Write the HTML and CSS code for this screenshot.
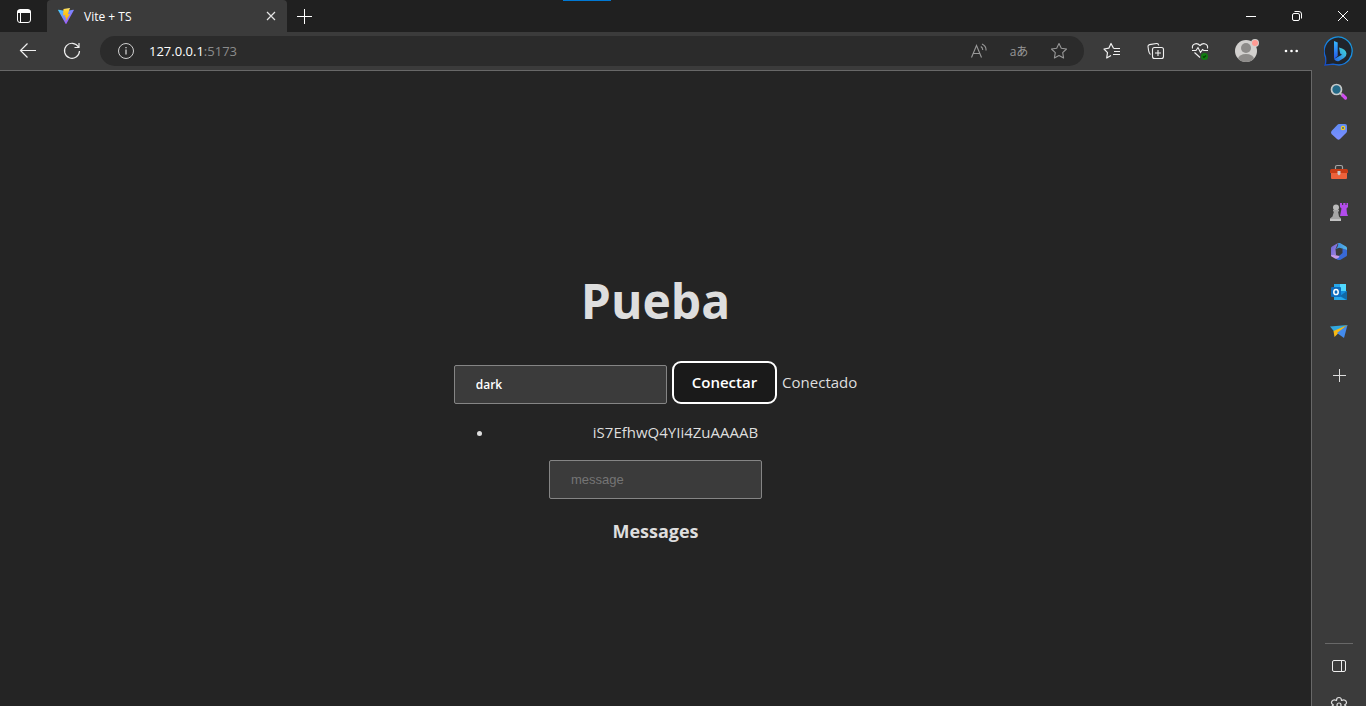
FILE: index.html
```html
<!DOCTYPE html>
<html lang="es">
<head>
<meta charset="utf-8">
<meta name="viewport" content="width=device-width, initial-scale=1">
<title>Vite + TS</title>
<link rel="stylesheet" href="styles.css">
</head>
<body>
<header class="titlebar">
  <span class="window-accent"></span>
  <button class="icon-button tab-actions" aria-label="Tab actions">
    <svg width="16" height="16" viewBox="0 0 16 16" fill="none" stroke="#fff"><rect x="1.5" y="1.5" width="13" height="13" rx="2.5"/><path d="M2 2.5h12v2H2z" fill="#fff"/><path d="M4.5 5v9"/></svg>
  </button>
  <div class="tab">
    <svg width="16" height="16" viewBox="0 0 32 32"><defs><linearGradient id="v1" x1="0" y1="0" x2="1" y2="1"><stop stop-color="#41d1ff"/><stop offset="1" stop-color="#bd34fe"/></linearGradient><linearGradient id="v2" x1="0" y1="0" x2="0" y2="1"><stop stop-color="#ffea83"/><stop offset=".2" stop-color="#ffcf28"/><stop offset="1" stop-color="#ffa800"/></linearGradient></defs><path d="M31.7 4.7 16.8 31.300q-.8 1.200-1.600 0L.2 4.700q-.5-1.400 1-1.300L16 6l14.700-2.600q1.500 0 1 1.300z" fill="url(#v1)"/><path d="m24 0-13 2.200-.9 12.600 4.400-.6-1 5 3-.7-1.500 8.500L24 12l-4.500.7L21.500 7z" fill="url(#v2)"/></svg>
    <span class="tab-title">Vite + TS</span>
    <button class="tab-close" aria-label="Close tab"><svg width="10" height="10" viewBox="0 0 10 10" stroke="#e4e4e4" stroke-width="1.200"><path d="m1 1 8 8M9 1 1 9"/></svg></button>
  </div>
  <button class="icon-button new-tab" aria-label="New tab"><svg width="15" height="15" viewBox="0 0 15 15" stroke="#fff"><path d="M7.500 0v15M0 7.500h15"/></svg></button>
  <div class="window-controls">
    <button class="icon-button" aria-label="Minimize"><svg width="10" height="10" viewBox="0 0 10 10" stroke="#fff"><path d="M0 5.500h10"/></svg></button>
    <button class="icon-button" aria-label="Restore"><svg width="10" height="10" viewBox="0 0 10 10" fill="none" stroke="#fff"><rect x=".5" y="2.500" width="7" height="7" rx="1.500"/><path d="M2.500.5H7A2.500 2.500 0 0 1 9.500 3v4.500"/></svg></button>
    <button class="icon-button" aria-label="Close"><svg width="10" height="10" viewBox="0 0 10 10" stroke="#fff"><path d="m0 0 10 10m0-10L0 10"/></svg></button>
  </div>
</header>

<div class="workspace">
  <div class="main-column">
    <nav class="toolbar" aria-label="Browser">
      <button class="icon-button" aria-label="Back"><svg width="18" height="16" viewBox="0 0 18 16" fill="none" stroke="#f0f0f0" stroke-width="1.200"><path d="M17 7.500H1.500M8.500.5l-7 7 7 7"/></svg></button>
      <button class="icon-button" aria-label="Reload"><svg width="18" height="18" viewBox="0 0 18 18" fill="none" stroke="#f0f0f0" stroke-width="1.200"><path d="M15.500 5A7.500 7.500 0 1 0 16.500 9M16 1v4.500h-4.500"/></svg></button>
      <div class="address">
        <svg class="info" width="18" height="18" viewBox="0 0 18 18" fill="none" stroke="#d0d0d0"><circle cx="9" cy="9" r="7.500"/><path d="M9 7.500v5M9 5v1.300" stroke-width="1.300"/></svg>
        <a class="url" href="#"><span class="host">127.0.0.1</span>:5173</a>
        <button class="icon-button" aria-label="Read aloud"><svg width="16" height="16" viewBox="0 0 16 16" fill="none" stroke="#989898" stroke-width="1.100"><path d="m.5 14.500 5-12 5 12M2.300 10.500h6.400M9.800 3.500q2 1.200 1.900 3.500M11 1q4.400 2 4 6.500"/></svg></button>
        <button class="icon-button translate" aria-label="Translate">aあ</button>
        <button class="icon-button" aria-label="Add favorite"><svg width="18" height="18" viewBox="0 0 18 18" fill="none" stroke="#989898" stroke-width="1.100" stroke-linejoin="round"><path d="m9 1.500 2.300 4.700 5.200.8-3.800 3.700.9 5.300L9 13.500 4.400 16l.9-5.300L1.500 7l5.200-.8z"/></svg></button>
      </div>
      <button class="icon-button favorites" aria-label="Favorites"><svg width="18" height="18" viewBox="0 0 18 18" fill="none" stroke="#f0f0f0" stroke-width="1.200" stroke-linejoin="round"><path d="M10.500 6.200 8 1.500 5.800 6.200 1 7l3.500 3.700L3.700 16 8 13.500M10.500 6.500h6.500M11 9.500h6M10 12.500h7"/></svg></button>
      <button class="icon-button" aria-label="Collections"><svg width="18" height="18" viewBox="0 0 18 18" fill="none" stroke="#f0f0f0" stroke-width="1.100"><rect x="5.500" y="5.500" width="11" height="11" rx="2"/><path d="M11 8v6M8 11h6M3.500 12.500C2 11.500 2 10.500 1.500 8L1 4.500Q.8 3 2.500 2.600L9.500 1.500q1.800-.3 2.300 2"/></svg></button>
      <button class="icon-button" aria-label="Browser essentials"><svg width="18" height="18" viewBox="0 0 18 18" fill="none" stroke="#f0f0f0" stroke-width="1.100"><path d="M1.500 6.500C.5 1.500 6 .3 9 3.500c3-3.200 8.500-2 7.500 3M1 8.500h4l2-3 2.500 5 2-3 1.300 1H17M3.500 10.500 9 15.500"/><circle cx="13.500" cy="14.500" r="3.500" fill="#107c10" stroke="none"/><path d="m12 14.500 1 1 2-2" stroke="#063d06"/></svg></button>
      <button class="icon-button profile" aria-label="Profile"><svg width="26" height="26" viewBox="0 0 26 26"><defs><clipPath id="face"><circle cx="13" cy="13" r="11"/></clipPath></defs><circle cx="13" cy="13" r="11" fill="#d2d0ce"/><g clip-path="url(#face)" fill="#8d8b89"><circle cx="13" cy="10" r="5"/><ellipse cx="13" cy="21" rx="8" ry="5"/></g><circle cx="22" cy="5" r="4" fill="#d2d0ce"/><circle cx="22" cy="5" r="3" fill="#ff9a93"/></svg></button>
      <button class="icon-button" aria-label="More"><svg width="14" height="4" viewBox="0 0 14 4" fill="#fff"><circle cx="2" cy="2" r="1.300"/><circle cx="7.500" cy="2" r="1.300"/><circle cx="12.700" cy="2" r="1.300"/></svg></button>
    </nav>

    <main class="page">
      <div class="app">
        <h1>Pueba</h1>
        <form class="connect">
          <input class="field name" type="text" value="dark" aria-label="Token">
          <button class="connect-button" type="button">Conectar</button>
          <span>Conectado</span>
        </form>
        <ul class="clients"><li>iS7EfhwQ4YIi4ZuAAAAB</li></ul>
        <form class="message-form"><input class="field" type="text" placeholder="message" aria-label="message"></form>
        <h3>Messages</h3>
      </div>
    </main>
  </div>

  <aside class="sidebar" aria-label="Sidebar">
    <button class="icon-button bing" aria-label="Bing"><svg width="30" height="30" viewBox="0 0 30 30"><defs><linearGradient id="b1" x1="1" y1="0" x2="0" y2="1"><stop stop-color="#189bdc"/><stop offset=".5" stop-color="#1689e5"/><stop offset="1" stop-color="#1748c4"/></linearGradient><linearGradient id="b2" x1="0" y1="0" x2="0" y2="1"><stop stop-color="#36b8ff"/><stop offset="1" stop-color="#2456e8"/></linearGradient><linearGradient id="b3" x1="1" y1="0" x2="0" y2="1"><stop stop-color="#45dfd6"/><stop offset="1" stop-color="#2264ed"/></linearGradient></defs><path d="M1 29c1.200-2 .8-5 .5-8A14 14 0 1 1 15 29q-3 0-6-.8Q5 29 1 29z" fill="#20242b" stroke="url(#b1)" stroke-width="1.300"/><path d="m10 5 3.700 1.600V20L10 23z" fill="url(#b2)"/><path d="M15 11.500q7 1.500 7.500 6 .1 3-2.500 4.500l-5 3q-2.500 1.300-5-2l8-4.300-1.800-1.200z" fill="url(#b3)"/></svg></button>
    <button class="icon-button" aria-label="Search"><svg width="18" height="18" viewBox="0 0 18 18"><path d="m12.500 12 3 3" stroke="#cf4cf0" stroke-width="3.200" stroke-linecap="round"/><path d="m10 10 2 2" stroke="#aaa" stroke-width="2"/><circle cx="6.500" cy="6.500" r="5" fill="#246a88" stroke="#c6c9c9" stroke-width="1.700"/></svg></button>
    <button class="icon-button" aria-label="Shopping"><svg width="18" height="18" viewBox="0 0 18 18"><defs><linearGradient id="tag" x2="0" y2="1"><stop stop-color="#5f8bf4"/><stop offset="1" stop-color="#7d8eff"/></linearGradient></defs><path d="M9 1h6q2 0 2 2v5q0 1-.7 1.700L10 16q-1.500 1.300-3 0L1.500 11q-1-1.500 0-3L7.500 1.700Q8 1 9 1z" fill="url(#tag)"/><circle cx="13" cy="5" r="1.600" fill="#405798" stroke="#f0d020" stroke-width="1.300"/></svg></button>
    <button class="icon-button" aria-label="Tools"><svg width="18" height="16" viewBox="0 0 18 16"><path d="M5.500 5V3q0-1.500 1.500-1.500h4q1.500 0 1.500 1.500v2" fill="none" stroke="#a5a5a5" stroke-width="1.200"/><path d="M1 8h16v6q0 1-1 1H2q-1 0-1-1z" fill="#ed623b"/><path d="M1.500 5h15q1.500 0 1.500 2v2H0V7q0-2 1.500-2z" fill="#c83c16"/><path d="M7.500 7h3v3L9 11.500 7.500 10z" fill="#c9cccf"/></svg></button>
    <button class="icon-button" aria-label="Games"><svg width="18" height="18" viewBox="0 0 18 18"><path d="M10 0h2v2h1.200V0h2.300v2h1V0H18v4l-1.500 1.500.5 5 1 2.500h-8l1.500-7.500L10 4z" fill="#b34cec"/><circle cx="6" cy="4.500" r="3" fill="#bbb"/><path d="M3 7h6v1.500H8l1 5 2 2V18H0v-2.500l2.500-2 1.500-5H3z" fill="#a5a5a5"/><path d="M0 16h11v2H0z" fill="#c2c2c2"/></svg></button>
    <button class="icon-button" aria-label="Microsoft 365"><svg width="18" height="18" viewBox="0 0 18 18"><defs><linearGradient id="m1" x2="1" y2="1"><stop stop-color="#6561d5"/><stop offset="1" stop-color="#a98be0"/></linearGradient><linearGradient id="m2" x2="1"><stop stop-color="#3a83dd"/><stop offset="1" stop-color="#55b9e9"/></linearGradient></defs><path d="M8 0 2 3.500Q1 4 1 5v7q0 1.500 1.500 2L6 12l-.5-6z" fill="url(#m1)"/><path d="M8 0q1-.4 2 0l6 3.500q1 .5 1 2V9l-4-3.300-3.500-1L5.500 6Q9 3 8 0z" fill="url(#m2)"/><path d="M17 7v5q0 1-1 1.500l-5 3q-2 1.200-4 0l-2-1.500 4.500-2.500L12.500 10V6q3.500 0 4.500 1z" fill="#3869d6"/><path d="m1 12 5 .3 3.500.7q-1 3.500-4.500 2.500l-3-1.700Q1 13 1 12z" fill="#c69bea"/></svg></button>
    <button class="icon-button" aria-label="Outlook"><svg width="18" height="18" viewBox="0 0 18 18"><path d="M4 1h12v8H4z" fill="#28a8ea"/><path d="M10 1h6v7h-6z" fill="#50d9ff"/><path d="M4 8h13v9H4z" fill="#1490df"/><path d="m10 13 7-5v9z" fill="#1269a5"/><path d="m4 10 12 7H4z" fill="#28a8ea"/><rect x="1" y="4" width="10" height="10" rx="1" fill="#0f6cbd"/><ellipse cx="6" cy="9" rx="2.200" ry="2.600" fill="none" stroke="#fff" stroke-width="1.500"/></svg></button>
    <button class="icon-button" aria-label="Drop"><svg width="18" height="16" viewBox="0 0 18 16"><path d="M0 2.500 17.500 1 4.500 8z" fill="#32a8de"/><path d="M17.500 1 3.500 7 4.500 13l3.500-3.500z" fill="#f8b912"/><path d="M17.500 1 7 9l7 5z" fill="#438bed"/></svg></button>
    <button class="icon-button add" aria-label="Customize"><svg width="13" height="13" viewBox="0 0 13 13" stroke="#ddd"><path d="M6.500 0v13M0 6.500h13"/></svg></button>
    <div class="sidebar-bottom">
      <button class="icon-button" aria-label="Hide sidebar"><svg width="14" height="12" viewBox="0 0 14 12" fill="none" stroke="#eee"><rect x=".5" y=".5" width="13" height="11" rx="1.500"/><path d="M9.500 1v10"/></svg></button>
      <button class="icon-button settings" aria-label="Settings"><svg width="18" height="18" viewBox="0 0 18 18" fill="none" stroke="#ddd" stroke-width="1.200" stroke-linejoin="round"><path d="M6.500 4.500Q6.500 1.500 9 1.500t2.500 3q3-1.500 4.500.7t-1.500 3.800q3 1.600 1.500 3.800t-4.500.7q0 3-2.500 3t-2.500-3q-3 1.500-4.500-.7T3.500 9Q.5 7.400 2 5.200t4.500-.7z"/><circle cx="9" cy="9" r="2"/></svg></button>
    </div>
  </aside>
</div>
</body>
</html>
```
FILE: styles.css
```css
* { box-sizing: border-box; }

body {
  margin: 0;
  height: 100vh;
  display: flex;
  flex-direction: column;
  overflow: hidden;
  background: #3b3b3b;
  color: #dedede;
  font-family: "Open Sans", "Noto Sans", "Noto Sans CJK JP", sans-serif;
}

svg { display: block; flex: none; }

button {
  border: 0;
  padding: 0;
  background: none;
  color: inherit;
  font-family: inherit;
}

.icon-button {
  display: flex;
  align-items: center;
  justify-content: center;
  flex: none;
}

.titlebar {
  position: relative;
  display: flex;
  flex: none;
  height: 32px;
  background: #202020;
}

.window-accent {
  position: absolute;
  top: 0;
  left: calc(50% - 120px);
  width: 48px;
  height: 1px;
  background: #0078d4;
}

.tab-actions { width: 47px; }

.tab {
  display: flex;
  align-items: center;
  gap: 10px;
  width: 240px;
  padding: 0 11px;
  border-radius: 4px 4px 0 0;
  background: #3b3b3b;
  color: #fff;
  font-size: 12px;
}

.tab-title { flex: 1; }
.tab-close { padding: 0; }
.new-tab { width: 35px; }

.window-controls {
  display: flex;
  margin-left: auto;
}

.window-controls .icon-button { width: 46px; }

.workspace {
  display: flex;
  flex: 1;
  min-height: 0;
}

.main-column {
  display: flex;
  flex: 1;
  flex-direction: column;
  min-width: 0;
}

.toolbar {
  display: flex;
  align-items: center;
  flex: none;
  height: 38px;
  padding-left: 6px;
}

.toolbar > .icon-button {
  width: 44px;
  height: 30px;
}

.toolbar > .profile { width: 48px; }
.toolbar > .icon-button:last-child { width: 42px; }
.toolbar > .favorites { margin-left: 6px; }

.address {
  display: flex;
  align-items: center;
  flex: 1;
  height: 30px;
  margin-left: 6px;
  padding: 0 5px 0 17px;
  border-radius: 15px;
  background: #2b2b2b;
}

.address .icon-button { width: 40px; }

.url {
  flex: 1;
  margin-left: 14px;
  color: #8b8b8b;
  font-size: 13px;
  text-decoration: none;
}

.host { color: #fff; }

.translate {
  color: #989898;
  font-size: 12px;
}

.page {
  display: flex;
  align-items: center;
  justify-content: center;
  flex: 1;
  min-height: 0;
  border-top: 1px solid #686868;
  border-right: 1px solid #686868;
  background: #242424;
  font-size: 15px;
  line-height: 24px;
}

.app {
  padding-top: 38px;
  text-align: center;
}

h1 {
  margin: 0 0 32px;
  font-size: 48px;
  line-height: 56px;
}

h3 {
  margin: 0;
  font-size: 18px;
  line-height: 24px;
}

.connect {
  display: flex;
  align-items: center;
  gap: 5px;
}

.field {
  width: 213px;
  height: 39px;
  padding: 0 21px;
  border: 1px solid #858585;
  border-radius: 2px;
  background: #3b3b3b;
  color: #fff;
  font-family: "Liberation Sans", sans-serif;
  font-size: 13px;
}

.field::placeholder { color: #757575; }

.name {
  align-self: flex-end;
  font-family: "Open Sans", sans-serif;
  font-size: 12px;
  font-weight: 600;
}

.connect-button {
  height: 43px;
  padding: 0 18px;
  border: 2px solid #fff;
  border-radius: 9px;
  background: #1a1a1a;
  color: #fff;
  font-size: 15px;
  font-weight: 600;
}

.clients {
  margin: 16px 0;
  padding-left: 40px;
}

.message-form { margin-bottom: 20px; }

.sidebar {
  display: flex;
  align-items: center;
  flex: none;
  flex-direction: column;
  width: 54px;
}

.sidebar .icon-button {
  width: 40px;
  height: 40px;
}

.sidebar .bing {
  height: 38px;
  margin-bottom: 2px;
}

.sidebar .add { margin-top: 3px; }

.sidebar-bottom {
  display: flex;
  align-items: center;
  flex-direction: column;
  width: 28px;
  margin-top: auto;
  padding-top: 2px;
  border-top: 1px solid #686868;
}

.sidebar .settings {
  align-items: flex-start;
  height: 20px;
  padding-top: 10px;
  overflow: hidden;
}
```
